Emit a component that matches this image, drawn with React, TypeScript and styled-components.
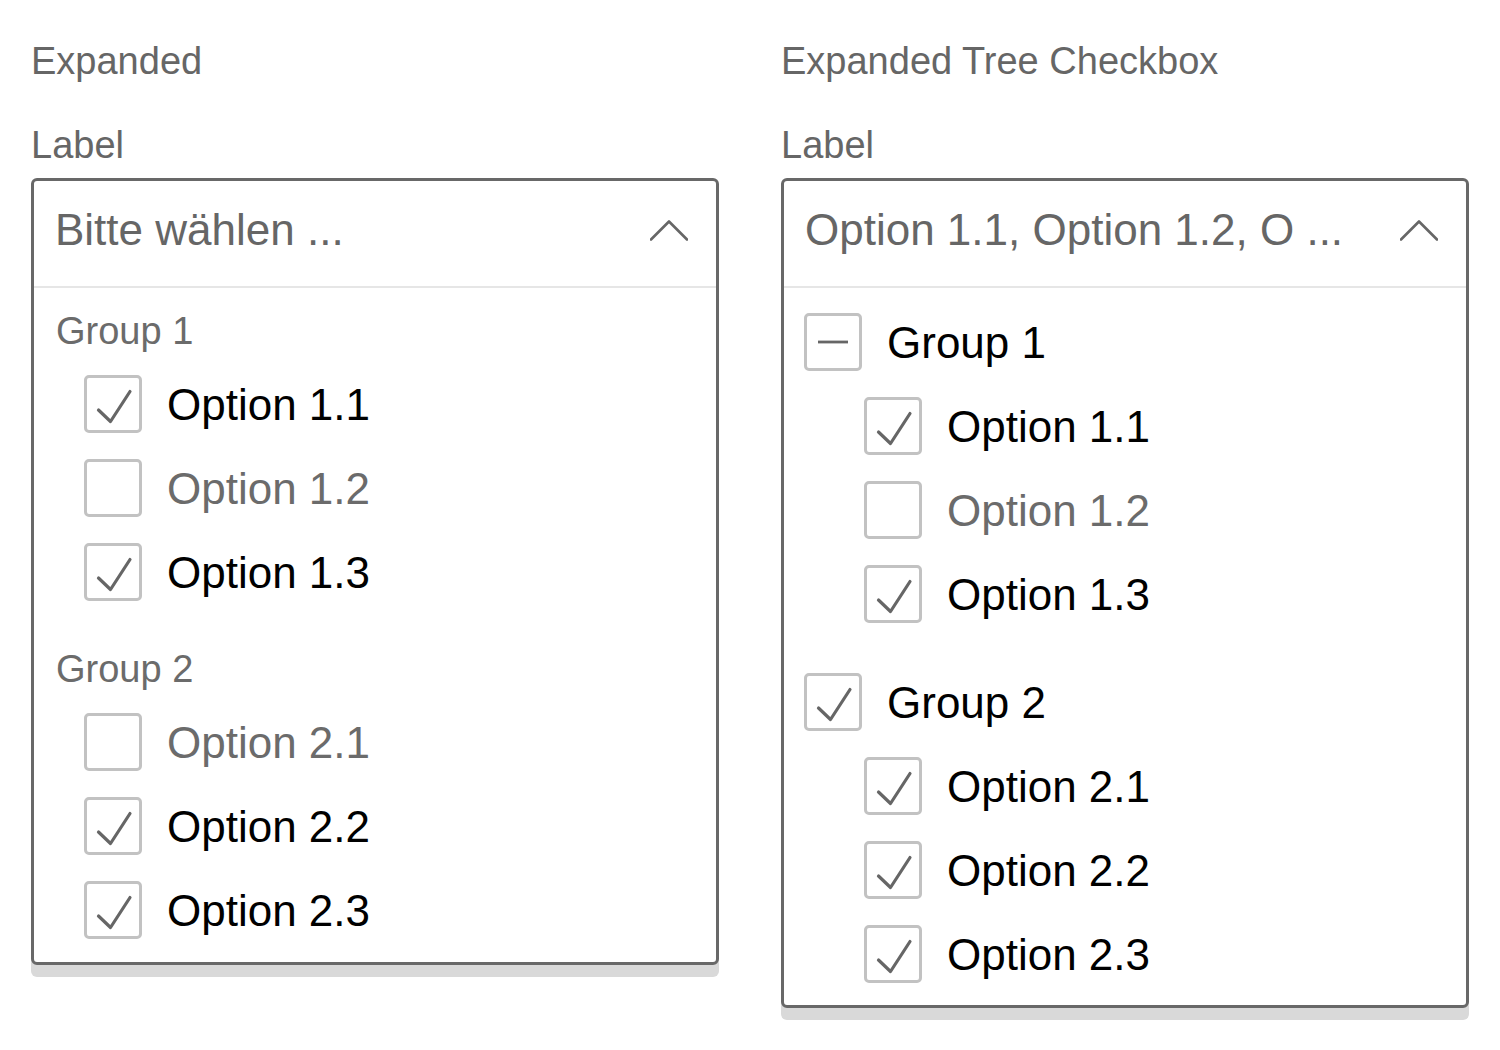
import React, { FunctionComponent } from "react";
import styled, { createGlobalStyle } from "styled-components";

const GlobalStyle = createGlobalStyle`
  body {
    margin: 0;
    background: #fff;
    font-family: "Liberation Sans", Arial, sans-serif;
  }
`;

type CheckState = "checked" | "unchecked" | "partial";

interface Option {
  label: string;
  checked: boolean;
}

interface Group {
  label: string;
  state: CheckState;
  options: Option[];
}

const groups: Group[] = [
  {
    label: "Group 1",
    state: "partial",
    options: [
      { label: "Option 1.1", checked: true },
      { label: "Option 1.2", checked: false },
      { label: "Option 1.3", checked: true },
    ],
  },
  {
    label: "Group 2",
    state: "checked",
    options: [
      { label: "Option 2.1", checked: false },
      { label: "Option 2.2", checked: true },
      { label: "Option 2.3", checked: true },
    ],
  },
];

// in the tree variant a checked group checks all of its children
const treeGroups: Group[] = [
  groups[0],
  {
    ...groups[1],
    options: groups[1].options.map((o) => ({ ...o, checked: true })),
  },
];

const Page = styled.div`
  display: flex;
  gap: 62px;
  padding: 38px 0 40px 31px;
`;

const Column = styled.div`
  display: flex;
  flex-direction: column;
  width: 688px;
`;

const SectionTitle = styled.h2`
  margin: 0;
  font-size: 38px;
  line-height: 46px;
  font-weight: 400;
  color: #666;
`;

const FieldLabel = styled.label`
  margin: 38px 0 10px;
  font-size: 38px;
  line-height: 46px;
  color: #666;
`;

const SelectBox = styled.div`
  border: 3px solid #686868;
  border-radius: 6px;
  background: #fff;
  box-shadow: 0 12px 0 #d9d9d9;
`;

const SelectHeader = styled.div`
  box-sizing: border-box;
  height: 107px;
  display: flex;
  align-items: center;
  justify-content: space-between;
  padding: 0 28px 8px 21px;
  border-bottom: 2px solid #e6e6e6;
`;

const SelectValue = styled.span`
  font-size: 44px;
  line-height: 50px;
  color: #666;
  white-space: nowrap;
`;

const OptionList = styled.div<{ $tree?: boolean }>`
  display: flex;
  flex-direction: column;
  gap: ${(p) => (p.$tree ? "50px" : "45px")};
  padding: ${(p) => (p.$tree ? "25px 20px 22px" : "20px 0 23px")};
`;

const GroupBlock = styled.div`
  display: flex;
  flex-direction: column;
`;

const GroupTitle = styled.div`
  padding-left: 22px;
  font-size: 38px;
  line-height: 46px;
  color: #6b6b6b;
`;

const OptionRows = styled.div<{ $indent: number; $top: number }>`
  display: flex;
  flex-direction: column;
  gap: 26px;
  margin-top: ${(p) => p.$top}px;
  padding-left: ${(p) => p.$indent}px;
`;

const OptionRow = styled.div`
  display: flex;
  align-items: center;
  height: 58px;
`;

const CheckBox = styled.span`
  box-sizing: border-box;
  flex: none;
  width: 58px;
  height: 58px;
  border: 3px solid #c2c2c2;
  border-radius: 5px;
  background: #fff;
  display: flex;

  svg {
    display: block;
  }
`;

const OptionText = styled.span<{ $active: boolean }>`
  margin-left: 25px;
  padding-top: 2px;
  font-size: 44px;
  line-height: 58px;
  color: ${(p) => (p.$active ? "#000" : "#6b6b6b")};
  white-space: nowrap;
`;

const Chevron: FunctionComponent = () => (
  <svg width="38" height="22" viewBox="0 0 38 22" fill="none">
    <polyline
      points="1,20.5 19,2.5 37,20.5"
      stroke="#666"
      strokeWidth="2.6"
      strokeLinecap="round"
      strokeLinejoin="round"
    />
  </svg>
);

const Check: FunctionComponent<{ state: CheckState }> = ({ state }) => (
  <CheckBox>
    <svg width="52" height="52" viewBox="0 0 52 52" fill="none">
      {state === "checked" && (
        <polyline
          points="11.5,32 23.5,43.5 43,13.5"
          stroke="#666"
          strokeWidth="3.2"
          strokeLinecap="round"
          strokeLinejoin="round"
        />
      )}
      {state === "partial" && (
        <line x1="11" y1="26" x2="41" y2="26" stroke="#666" strokeWidth="2.8" />
      )}
    </svg>
  </CheckBox>
);

const Row: FunctionComponent<{ label: string; state: CheckState }> = ({
  label,
  state,
}) => (
  <OptionRow>
    <Check state={state} />
    <OptionText $active={state !== "unchecked"}>{label}</OptionText>
  </OptionRow>
);

const toState = (checked: boolean): CheckState =>
  checked ? "checked" : "unchecked";

const App: FunctionComponent = () => (
  <Page>
    <GlobalStyle />
    <Column>
      <SectionTitle>Expanded</SectionTitle>
      <FieldLabel>Label</FieldLabel>
      <SelectBox>
        <SelectHeader>
          <SelectValue>Bitte wählen ...</SelectValue>
          <Chevron />
        </SelectHeader>
        <OptionList>
          {groups.map((group) => (
            <GroupBlock key={group.label}>
              <GroupTitle>{group.label}</GroupTitle>
              <OptionRows $indent={50} $top={21}>
                {group.options.map((opt) => (
                  <Row
                    key={opt.label}
                    label={opt.label}
                    state={toState(opt.checked)}
                  />
                ))}
              </OptionRows>
            </GroupBlock>
          ))}
        </OptionList>
      </SelectBox>
    </Column>
    <Column>
      <SectionTitle>Expanded Tree Checkbox</SectionTitle>
      <FieldLabel>Label</FieldLabel>
      <SelectBox>
        <SelectHeader>
          <SelectValue>Option 1.1, Option 1.2, O ...</SelectValue>
          <Chevron />
        </SelectHeader>
        <OptionList $tree>
          {treeGroups.map((group) => (
            <GroupBlock key={group.label}>
              <Row label={group.label} state={group.state} />
              <OptionRows $indent={60} $top={26}>
                {group.options.map((opt) => (
                  <Row
                    key={opt.label}
                    label={opt.label}
                    state={toState(opt.checked)}
                  />
                ))}
              </OptionRows>
            </GroupBlock>
          ))}
        </OptionList>
      </SelectBox>
    </Column>
  </Page>
);

export default App;
